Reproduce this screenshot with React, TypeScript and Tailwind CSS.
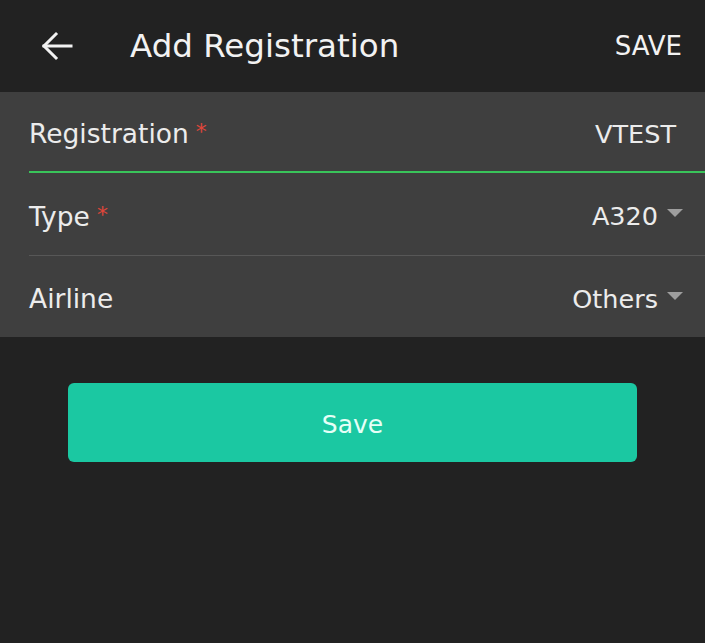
import React from 'react';

const font = { fontFamily: '"DejaVu Sans", Roboto, sans-serif' };

function Caret() {
  return (
    <svg width="16" height="9" viewBox="0 0 16 9" className="ml-[9px] mt-[-6px]">
      <path d="M0 0 L16 0 L8 8 Z" fill="#9e9e9e" />
    </svg>
  );
}

function Row({ label, value, required, dropdown, line, h }: { label: string; value: string; required?: boolean; dropdown?: boolean; line: 'green' | 'gray' | 'none'; h: string }) {
  return (
    <div className="pl-[29px]">
      <div className={`${h} flex items-center justify-between pr-[22px] pt-[5px]`}>
        <div className="flex items-start text-[26.5px] text-[#ececec]">
          <span>{label}</span>
          {required && <span className="text-[#e0463a] text-[22px] ml-[7px] mt-[1px]">*</span>}
        </div>
        <div className="flex items-center text-[25.5px] text-[#ececec]">
          <span className={dropdown ? '' : 'mr-[7px]'}>{value}</span>
          {dropdown && <Caret />}
        </div>
      </div>
      {line === 'green' && <div className="h-[2px] bg-[#39c45a]" />}
      {line === 'gray' && <div className="h-px bg-[#575757]" />}
    </div>
  );
}

export default function App() {
  return (
    <div className="w-[705px] h-[643px] bg-[#222222] overflow-hidden" style={font}>
      {/* Header */}
      <div className="h-[92px] flex items-center pl-[40px] pr-[23px]">
        <svg width="34" height="30" viewBox="0 0 34 30" fill="none" stroke="#f2f2f2" strokeWidth="3" strokeLinecap="square">
          <path d="M4 15 H31" />
          <path d="M16 3 L4 15 L16 27" />
        </svg>
        <h1 className="ml-[56px] text-[32.5px] text-[#f2f2f2] flex-1">Add Registration</h1>
        <span className="text-[26px] text-[#f2f2f2]">SAVE</span>
      </div>

      {/* Form */}
      <div className="bg-[#3f3f3f]">
        <Row label="Registration" value="VTEST" required line="green" h="h-[79px]" />
        <Row label="Type" value="A320" required dropdown line="gray" h="h-[82px]" />
        <Row label="Airline" value="Others" dropdown line="none" h="h-[81px]" />
      </div>

      {/* Button */}
      <div className="px-[68px] pt-[46px]">
        <button className="w-full h-[79px] pt-[5px] rounded-[6px] bg-[#1bc8a2] text-[#e6fff7] text-[25px]">Save</button>
      </div>
    </div>
  );
}
